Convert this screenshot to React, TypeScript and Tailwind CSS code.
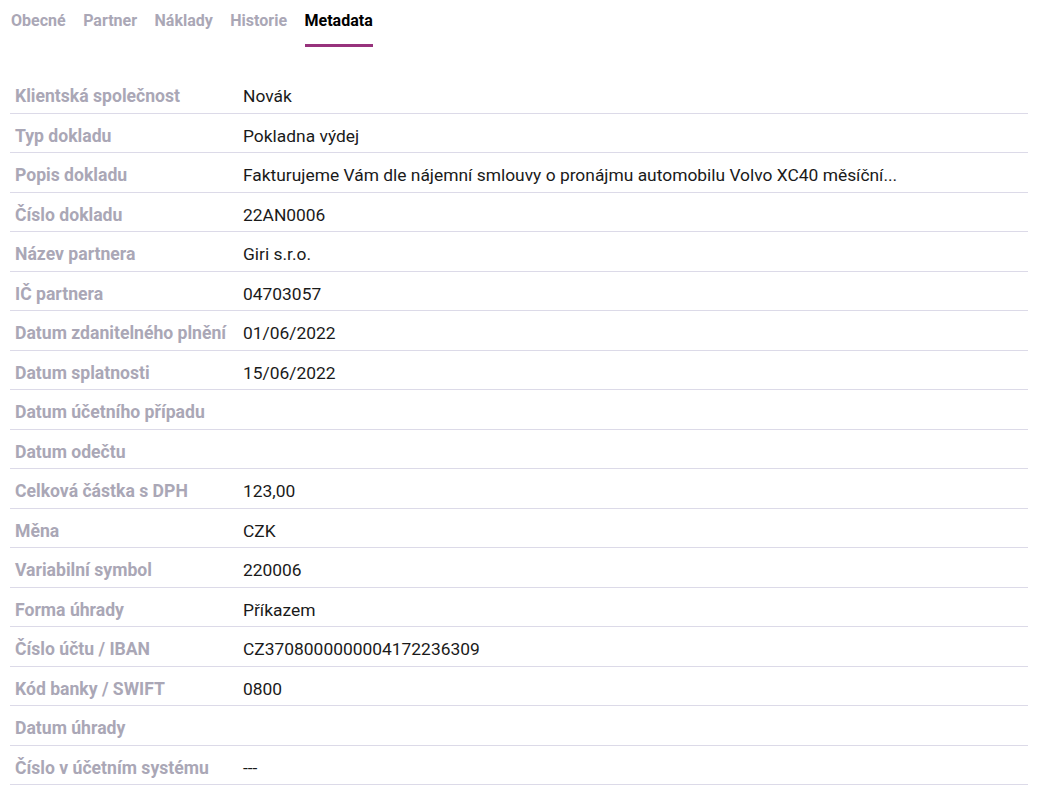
const tabs = ['Obecné', 'Partner', 'Náklady', 'Historie', 'Metadata']

const rows: [string, string][] = [
  ['Klientská společnost', 'Novák'],
  ['Typ dokladu', 'Pokladna výdej'],
  ['Popis dokladu', 'Fakturujeme Vám dle nájemní smlouvy o pronájmu automobilu Volvo XC40 měsíční...'],
  ['Číslo dokladu', '22AN0006'],
  ['Název partnera', 'Giri s.r.o.'],
  ['IČ partnera', '04703057'],
  ['Datum zdanitelného plnění', '01/06/2022'],
  ['Datum splatnosti', '15/06/2022'],
  ['Datum účetního případu', ''],
  ['Datum odečtu', ''],
  ['Celková částka s DPH', '123,00'],
  ['Měna', 'CZK'],
  ['Variabilní symbol', '220006'],
  ['Forma úhrady', 'Příkazem'],
  ['Číslo účtu / IBAN', 'CZ3708000000004172236309'],
  ['Kód banky / SWIFT', '0800'],
  ['Datum úhrady', ''],
  ['Číslo v účetním systému', '---'],
]

export default function App() {
  return (
    <div className="w-[1038px] h-[796px] bg-white px-[10px] font-['Roboto',sans-serif] overflow-hidden">
      <div className="flex gap-[17.5px] pt-[11px] pl-[1px]">
        {tabs.map((t) => (
          <div key={t} className="flex flex-col">
            <span
              className={
                'text-[16px] leading-[20px] font-bold ' +
                (t === 'Metadata' ? 'text-black' : 'text-[#aaa7b6]')
              }>
              {t}
            </span>
            <div className={'mt-[13px] h-[3px] ' + (t === 'Metadata' ? 'bg-[#97327c]' : 'bg-transparent')} />
          </div>
        ))}
      </div>
      <div className="mt-[27px]">
        {rows.map(([label, value]) => (
          <div key={label} className="flex items-center h-[39.5px] border-b border-[#dcdae8]">
            <div className="w-[233px] pl-[5px] pt-[6px] text-[17.6px] leading-[22px] font-bold text-[#aaa7b6] whitespace-nowrap">
              {label}
            </div>
            <div className="pt-[6px] text-[17.4px] leading-[22px] text-[#1a1a1a] whitespace-nowrap">{value}</div>
          </div>
        ))}
      </div>
    </div>
  )
}
